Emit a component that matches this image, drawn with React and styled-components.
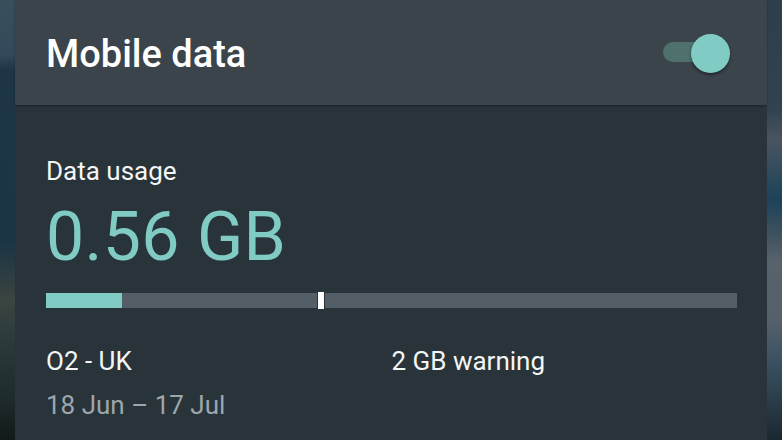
import React from 'react';
import styled, { createGlobalStyle } from 'styled-components';

const GlobalStyle = createGlobalStyle`
  html, body {
    margin: 0;
    padding: 0;
    overflow: hidden;
    background: #1c2a33;
  }
  * { box-sizing: border-box; }
`;

const Wallpaper = styled.div`
  width: 782px;
  height: 440px;
  padding: 0 15px;
  display: flex;
  background:
    linear-gradient(180deg, #3a4f5c 0px, #34495a 55px, #1d3547 70px, #1b3446 240px, #2a3b42 270px, #3b4541 300px, #2c3a3c 340px, #1e2a2c 400px, #121a1a 440px) left / 15px 100% no-repeat,
    linear-gradient(180deg, #2d3f4c 0px, #31434f 110px, #4a5460 140px, #2e4a5c 175px, #1d4259 200px, #3f525e 235px, #58626b 260px, #56606a 320px, #3c5262 360px, #2a3d48 400px, #1b2730 440px) right / 15px 100% no-repeat;
`;

const Card = styled.div`
  flex: 1;
  display: flex;
  flex-direction: column;
  background: #29333a;
  font-family: Roboto, "Liberation Sans", sans-serif;
  color: #ffffff;
`;

const Header = styled.header`
  height: 105px;
  flex-shrink: 0;
  display: flex;
  align-items: center;
  justify-content: space-between;
  padding: 0 37px 0 31px;
  background: #3b444b;
  box-shadow: 0 1px 2px rgba(0, 0, 0, 0.35);
  position: relative;
  z-index: 1;
`;

const Title = styled.h1`
  margin: 0;
  font-size: 38px;
  font-weight: 500;
  line-height: 1;
  color: #ffffff;
  padding-top: 2px;
`;

const Switch = styled.div`
  position: relative;
  width: 67px;
  height: 38px;
`;

const Track = styled.div`
  position: absolute;
  left: 0;
  top: 8px;
  width: 52px;
  height: 20px;
  border-radius: 10px;
  background: ${p => (p.$on ? '#4e716e' : '#5b646a')};
`;

const Thumb = styled.div`
  position: absolute;
  right: 0;
  top: 0;
  width: 39px;
  height: 39px;
  border-radius: 50%;
  background: ${p => (p.$on ? '#80cbc4' : '#bdbdbd')};
  box-shadow: 0 2px 3px rgba(0, 0, 0, 0.45);
`;

const Body = styled.section`
  flex: 1;
  padding: 51px 30px 0 31px;
  display: flex;
  flex-direction: column;
`;

const Label = styled.div`
  font-size: 26px;
  line-height: 30px;
  color: ${p => p.$muted ? '#9da6ab' : '#f4f5f5'};
`;

const Amount = styled.div`
  margin-top: 11px;
  font-size: 68px;
  line-height: 80px;
  font-weight: 400;
  color: #80cbc4;
  letter-spacing: 0.3px;
`;

const Bar = styled.div`
  position: relative;
  margin-top: 16px;
  height: 15px;
  background: #545e66;
`;

const Fill = styled.div`
  height: 100%;
  background: #80cbc4;
`;

const Marker = styled.div`
  position: absolute;
  top: -1px;
  width: 8px;
  height: 17px;
  background: #ffffff;
  border: 1px solid #2a3238;
  border-top: none;
  border-bottom: none;
`;

const Details = styled.div`
  margin-top: 38px;
  display: grid;
  grid-template-columns: 1fr 1fr;
`;

const Column = styled.div`
  display: flex;
  flex-direction: column;
  gap: 14px;
`;

const usage = { used: 0.56, warning: 2, max: 5.08 };

export default function App() {
  const fillPct = (usage.used / usage.max) * 100;
  const markerPct = (usage.warning / usage.max) * 100;
  return (
    <>
      <GlobalStyle />
      <Wallpaper>
        <Card>
          <Header>
            <Title>Mobile data</Title>
            <Switch>
              <Track $on />
              <Thumb $on />
            </Switch>
          </Header>
          <Body>
            <Label>Data usage</Label>
            <Amount>0.56 GB</Amount>
            <Bar>
              <Fill style={{ width: `${fillPct}%` }} />
              <Marker style={{ left: `calc(${markerPct}% - 1px)` }} />
            </Bar>
            <Details>
              <Column>
                <Label>O2 - UK</Label>
                <Label $muted>18 Jun – 17 Jul</Label>
              </Column>
              <Column>
                <Label>2 GB warning</Label>
              </Column>
            </Details>
          </Body>
        </Card>
      </Wallpaper>
    </>
  );
}
